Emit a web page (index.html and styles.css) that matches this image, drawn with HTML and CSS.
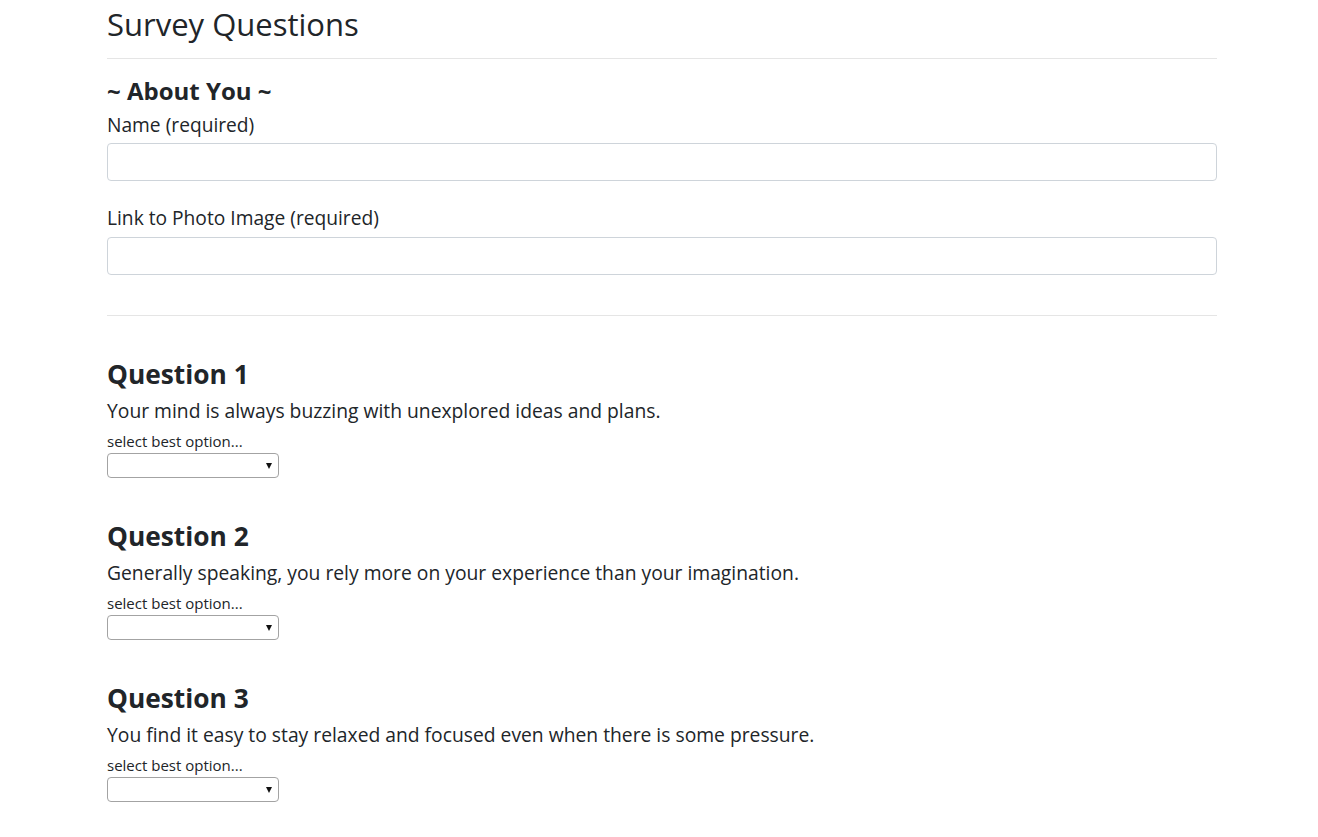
FILE: index.html
```html
<!DOCTYPE html>
<html lang="en">
<head>
<meta charset="utf-8">
<title>Survey</title>
<link rel="stylesheet" href="styles.css">
</head>
<body>
<div class="container">
  <h1 class="title">Survey Questions</h1>
  <hr class="rule rule-top">
  <h4 class="section">~ About You ~</h4>
  <div class="field field-first">
    <label class="label">Name (required)</label>
    <input class="input" type="text">
  </div>
  <div class="field field-second">
    <label class="label">Link to Photo Image (required)</label>
    <input class="input" type="text">
  </div>
  <hr class="rule rule-mid">

  <div class="question">
    <h3 class="q-title">Question 1</h3>
    <p class="q-text">Your mind is always buzzing with unexplored ideas and plans.</p>
    <div class="q-hint">select best option...</div>
    <span class="select-wrap"><select class="select"><option></option></select></span>
  </div>
  <div class="question">
    <h3 class="q-title">Question 2</h3>
    <p class="q-text">Generally speaking, you rely more on your experience than your imagination.</p>
    <div class="q-hint">select best option...</div>
    <span class="select-wrap"><select class="select"><option></option></select></span>
  </div>
  <div class="question">
    <h3 class="q-title">Question 3</h3>
    <p class="q-text">You find it easy to stay relaxed and focused even when there is some pressure.</p>
    <div class="q-hint">select best option...</div>
    <span class="select-wrap"><select class="select"><option></option></select></span>
  </div>
</div>
</body>
</html>
```

FILE: styles.css
```css
html, body {
  margin: 0;
  padding: 0;
  background: #fff;
}
body {
  font-family: "Open Sans", "Noto Sans", sans-serif;
  color: #212529;
}
.container {
  width: 1110px;
  margin-left: 107px;
  padding-top: 3px;
}
.title {
  margin: 0;
  font-size: 31px;
  font-weight: 500;
  line-height: 42px;
}
.rule {
  border: 0;
  border-top: 1px solid #e5e5e5;
  margin: 0;
  height: 0;
}
.rule-top {
  margin-top: 13px;
}
.section {
  margin: 16px 0 0;
  font-size: 24px;
  font-weight: 700;
  line-height: 32px;
}
.field {
  display: flex;
  flex-direction: column;
}
.field-first {
  margin-top: 5px;
  gap: 5px;
}
.field-second {
  margin-top: 24px;
  gap: 6px;
}
.label {
  font-size: 19.2px;
  line-height: 26px;
}
.input {
  box-sizing: border-box;
  height: 38px;
  width: 100%;
  border: 1px solid #ced4da;
  border-radius: 4px;
  background: #fff;
  margin: 0;
  padding: 6px 12px;
  font: inherit;
}
.rule-mid {
  margin-top: 40px;
}
.question {
  display: flex;
  flex-direction: column;
  align-items: flex-start;
  margin-top: 40px;
}
.q-title {
  margin: 0;
  font-size: 26.3px;
  font-weight: 700;
  line-height: 36px;
}
.q-text {
  margin: 6px 0 0;
  font-size: 19.3px;
  line-height: 26px;
}
.q-hint {
  margin-top: 7px;
  font-size: 15px;
  line-height: 20px;
}
.select-wrap {
  position: relative;
  display: block;
  margin-top: 2px;
  width: 172px;
  height: 25px;
}
.select {
  appearance: none;
  -webkit-appearance: none;
  box-sizing: border-box;
  width: 172px;
  height: 25px;
  border: 1px solid #a3a3a3;
  border-radius: 4px;
  background: #fff;
  margin: 0;
  padding: 0 4px;
  font: 13px "Open Sans", sans-serif;
}
.select-wrap::after {
  content: "";
  position: absolute;
  right: 7px;
  top: 10px;
  width: 0;
  height: 0;
  border-left: 3.5px solid transparent;
  border-right: 3.5px solid transparent;
  border-top: 6px solid #111;
  pointer-events: none;
}
```
